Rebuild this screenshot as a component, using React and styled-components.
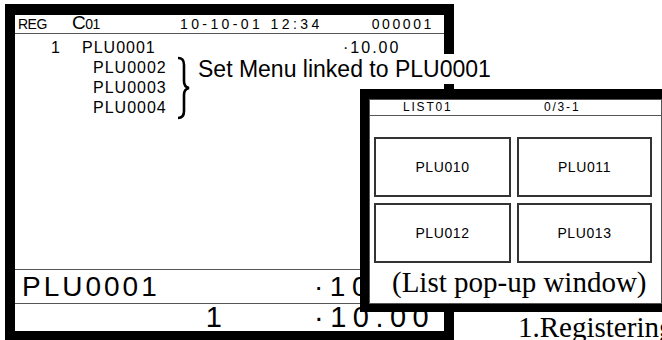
import React from 'react';
import styled, { createGlobalStyle } from 'styled-components';

const GlobalStyle = createGlobalStyle`
  html, body {
    margin: 0;
    padding: 0;
    background: #fff;
  }
  body {
    font-family: 'Liberation Sans', Arial, sans-serif;
    color: #000;
  }
`;

const subItems = ['PLU0002', 'PLU0003', 'PLU0004'];
const listItems = ['PLU010', 'PLU011', 'PLU012', 'PLU013'];

const App = () => (
  <>
    <GlobalStyle />
    <Stage>
      <Screen>
        <Header>
          <HeadText>REG</HeadText>
          <HeadText>
            <BigC>C</BigC>01
          </HeadText>
          <HeadText spacing="3.4px">10-10-01 12:34</HeadText>
          <HeadText spacing="2.6px">000001</HeadText>
        </Header>
        <Body>
          <ItemRow>
            <Qty>1</Qty>
            <ItemName>PLU0001</ItemName>
            <ItemPrice>·10.00</ItemPrice>
          </ItemRow>
          {subItems.map((name) => (
            <SubItem key={name}>{name}</SubItem>
          ))}
        </Body>
        <TotalRow>
          <BigName>PLU0001</BigName>
          <BigPrice>·10.00</BigPrice>
        </TotalRow>
        <TotalRow last>
          <BigQty>1</BigQty>
          <BigPrice>·10.00</BigPrice>
        </TotalRow>
      </Screen>

      <Brace viewBox="0 0 14 64" width="14" height="64">
        <path
          d="M2 2 Q8 2 8 9 L8 25 Q8 31 13 32 Q8 33 8 39 L8 55 Q8 62 2 62"
          fill="none"
          stroke="#000"
          strokeWidth="2.6"
        />
      </Brace>
      <Note>Set Menu linked to PLU0001</Note>

      <Popup>
        <PopupInner>
          <PopupHeader>
            <span>LIST01</span>
            <span>0/3-1</span>
          </PopupHeader>
          <KeyGrid>
            {listItems.map((name) => (
              <Key key={name}>{name}</Key>
            ))}
          </KeyGrid>
          <PopupCaption>(List pop-up window)</PopupCaption>
        </PopupInner>
      </Popup>

      <Caption>1.Registering set menu items</Caption>
    </Stage>
  </>
);

const Stage = styled.div`
  position: relative;
  width: 662px;
  height: 340px;
  overflow: hidden;
`;

const Screen = styled.div`
  display: flex;
  flex-direction: column;
  width: 429px;
  height: 316px;
  margin: 4px 0 0 5px;
  border: 10px solid #000;
  border-top-width: 11px;
  background: #fff;
`;

const Header = styled.div`
  display: grid;
  grid-template-columns: 54px 108px 1fr auto;
  align-items: center;
  height: 18px;
  padding: 0 10px 0 3px;
  border-bottom: 1px solid #555;
  font-size: 14px;
  line-height: 18px;
`;

const HeadText = styled.span`
  letter-spacing: ${(p) => p.spacing || '-0.5px'};
  white-space: pre;
`;

const BigC = styled.span`
  font-size: 19px;
  line-height: 14px;
`;

const Body = styled.div`
  flex: 1;
  padding-top: 4px;
  font-size: 16px;
  line-height: 20px;
`;

const ItemRow = styled.div`
  display: flex;
`;

const Qty = styled.span`
  width: 45px;
  text-align: right;
`;

const ItemName = styled.span`
  flex: 1;
  margin-left: 22px;
  letter-spacing: 1px;
`;

const ItemPrice = styled.span`
  width: 101px;
  letter-spacing: 2px;
`;

const SubItem = styled.div`
  padding-left: 78px;
  letter-spacing: 1px;
`;

const TotalRow = styled.div`
  display: grid;
  grid-template-columns: 1fr 130px;
  align-items: center;
  height: ${(p) => (p.last ? '27px' : '33px')};
  border-top: 1px solid #555;
  font-size: ${(p) => (p.last ? '29px' : '28px')};
  line-height: ${(p) => (p.last ? '27px' : '33px')};
`;

const BigName = styled.span`
  padding-left: 7px;
  letter-spacing: 3px;
`;

const BigQty = styled.span`
  padding-right: 92px;
  text-align: right;
`;

const BigPrice = styled.span`
  letter-spacing: 6.5px;
  white-space: pre;
`;

const Brace = styled.svg`
  position: absolute;
  left: 176px;
  top: 56px;
`;

const Note = styled.div`
  position: absolute;
  left: 192px;
  top: 54px;
  padding: 0 6px;
  background: #fff;
  font-size: 23px;
  line-height: 30px;
  white-space: nowrap;
`;

const Popup = styled.div`
  position: absolute;
  left: 360px;
  top: 89px;
  display: flex;
  width: 302px;
  padding: 10px 0 8px 9px;
  box-sizing: border-box;
  background: #000;
`;

const PopupInner = styled.div`
  flex: 1;
  display: flex;
  flex-direction: column;
  border: 1px solid #555;
  background: #fff;
`;

const PopupHeader = styled.div`
  display: grid;
  grid-template-columns: 141px auto;
  height: 15px;
  padding-left: 33px;
  border-bottom: 1px solid #555;
  font-size: 12px;
  line-height: 15px;
  letter-spacing: 1.8px;
`;

const KeyGrid = styled.div`
  display: grid;
  grid-template-columns: 137px 135px;
  grid-auto-rows: 60px;
  gap: 6px;
  padding: 21px 0 0 4px;
`;

const Key = styled.div`
  display: flex;
  align-items: center;
  justify-content: center;
  border: 2px solid #333;
  font-size: 14px;
  letter-spacing: 0.6px;
`;

const PopupCaption = styled.div`
  padding: 4px 0 6px 22px;
  font-family: 'Liberation Serif', 'Times New Roman', serif;
  font-size: 29px;
  line-height: 30px;
  white-space: nowrap;
`;

const Caption = styled.div`
  position: absolute;
  left: 518px;
  top: 310px;
  font-family: 'Liberation Serif', 'Times New Roman', serif;
  font-size: 29px;
  line-height: 34px;
  white-space: nowrap;
`;

export default App;
